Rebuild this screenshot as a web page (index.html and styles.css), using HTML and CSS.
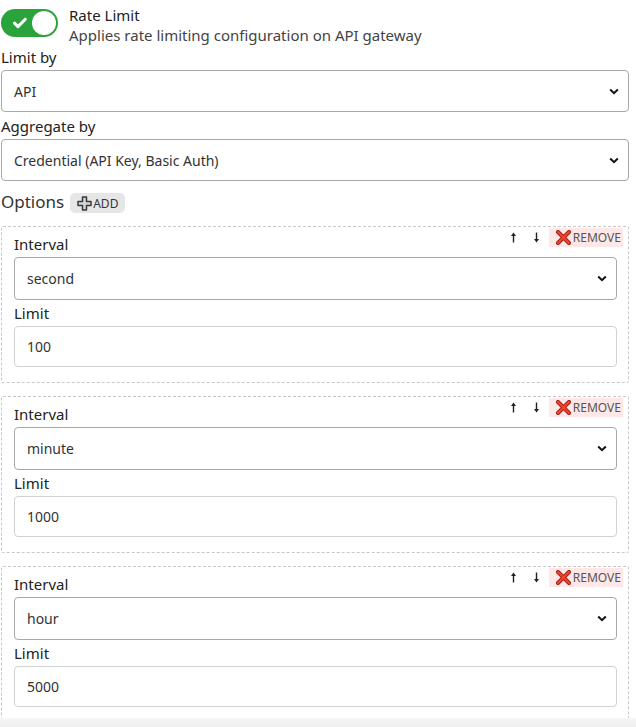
FILE: index.html
```html
<!DOCTYPE html>
<html>
<head>
<meta charset="utf-8">
<link rel="stylesheet" href="styles.css">
</head>
<body>
<div class="page">
  <div class="header">
    <div class="toggle">
      <svg class="check" width="14" height="12" viewBox="0 0 14 12"><path d="M1.5 6.2 L5 9.6 L12.3 2.2" fill="none" stroke="#fff" stroke-width="3" stroke-linecap="round" stroke-linejoin="round"/></svg>
      <span class="knob"></span>
    </div>
    <div class="header-text">
      <div class="title">Rate Limit</div>
      <div class="desc">Applies rate limiting configuration on API gateway</div>
    </div>
  </div>

  <div class="field">
    <div class="label">Limit by</div>
    <div class="select big">
      <span>API</span>
      <svg class="chev" width="10" height="7" viewBox="0 0 10 7"><path d="M1.2 1.5 L5 5.2 L8.8 1.5" fill="none" stroke="#111" stroke-width="2"/></svg>
    </div>
  </div>

  <div class="field">
    <div class="label">Aggregate by</div>
    <div class="select big">
      <span>Credential (API Key, Basic Auth)</span>
      <svg class="chev" width="10" height="7" viewBox="0 0 10 7"><path d="M1.2 1.5 L5 5.2 L8.8 1.5" fill="none" stroke="#111" stroke-width="2"/></svg>
    </div>
  </div>

  <div class="options-head">
    <span class="options-title">Options</span>
    <span class="add-btn">
      <svg width="15" height="15" viewBox="0 0 15 15"><path d="M5.5 1 H9.5 V5.5 H14 V9.5 H9.5 V14 H5.5 V9.5 H1 V5.5 H5.5 Z" fill="#d4d4d4" stroke="#3a3a3a" stroke-width="1.5" stroke-linejoin="round"/></svg>
      <span>ADD</span>
    </span>
  </div>

  <div class="cards">
    <div class="card">
      <div class="actions">
        <svg class="arrow" width="7" height="11" viewBox="0 0 7 11"><path d="M3.5 3 V10.5" stroke="#222" stroke-width="1.4"/><path d="M3.5 0.5 L6 4 H1 Z" fill="#222"/></svg>
        <svg class="arrow" width="7" height="11" viewBox="0 0 7 11"><path d="M3.5 0.5 V8" stroke="#222" stroke-width="1.4"/><path d="M3.5 10.5 L6 7 H1 Z" fill="#222"/></svg>
        <span class="remove">
          <svg width="15" height="15" viewBox="0 0 15 15"><path d="M2 2 L13 13 M13 2 L2 13" stroke="#9a1c12" stroke-width="4" stroke-linecap="round"/><path d="M2 2 L13 13 M13 2 L2 13" stroke="#f0442c" stroke-width="2.4" stroke-linecap="round"/></svg>
          <span>REMOVE</span>
        </span>
      </div>
      <div class="label">Interval</div>
      <div class="select">
        <span>second</span>
        <svg class="chev" width="10" height="7" viewBox="0 0 10 7"><path d="M1.2 1.5 L5 5.2 L8.8 1.5" fill="none" stroke="#111" stroke-width="2"/></svg>
      </div>
      <div class="label">Limit</div>
      <div class="input">100</div>
    </div>

    <div class="card">
      <div class="actions">
        <svg class="arrow" width="7" height="11" viewBox="0 0 7 11"><path d="M3.5 3 V10.5" stroke="#222" stroke-width="1.4"/><path d="M3.5 0.5 L6 4 H1 Z" fill="#222"/></svg>
        <svg class="arrow" width="7" height="11" viewBox="0 0 7 11"><path d="M3.5 0.5 V8" stroke="#222" stroke-width="1.4"/><path d="M3.5 10.5 L6 7 H1 Z" fill="#222"/></svg>
        <span class="remove">
          <svg width="15" height="15" viewBox="0 0 15 15"><path d="M2 2 L13 13 M13 2 L2 13" stroke="#9a1c12" stroke-width="4" stroke-linecap="round"/><path d="M2 2 L13 13 M13 2 L2 13" stroke="#f0442c" stroke-width="2.4" stroke-linecap="round"/></svg>
          <span>REMOVE</span>
        </span>
      </div>
      <div class="label">Interval</div>
      <div class="select">
        <span>minute</span>
        <svg class="chev" width="10" height="7" viewBox="0 0 10 7"><path d="M1.2 1.5 L5 5.2 L8.8 1.5" fill="none" stroke="#111" stroke-width="2"/></svg>
      </div>
      <div class="label">Limit</div>
      <div class="input">1000</div>
    </div>

    <div class="card">
      <div class="actions">
        <svg class="arrow" width="7" height="11" viewBox="0 0 7 11"><path d="M3.5 3 V10.5" stroke="#222" stroke-width="1.4"/><path d="M3.5 0.5 L6 4 H1 Z" fill="#222"/></svg>
        <svg class="arrow" width="7" height="11" viewBox="0 0 7 11"><path d="M3.5 0.5 V8" stroke="#222" stroke-width="1.4"/><path d="M3.5 10.5 L6 7 H1 Z" fill="#222"/></svg>
        <span class="remove">
          <svg width="15" height="15" viewBox="0 0 15 15"><path d="M2 2 L13 13 M13 2 L2 13" stroke="#9a1c12" stroke-width="4" stroke-linecap="round"/><path d="M2 2 L13 13 M13 2 L2 13" stroke="#f0442c" stroke-width="2.4" stroke-linecap="round"/></svg>
          <span>REMOVE</span>
        </span>
      </div>
      <div class="label">Interval</div>
      <div class="select">
        <span>hour</span>
        <svg class="chev" width="10" height="7" viewBox="0 0 10 7"><path d="M1.2 1.5 L5 5.2 L8.8 1.5" fill="none" stroke="#111" stroke-width="2"/></svg>
      </div>
      <div class="label">Limit</div>
      <div class="input">5000</div>
    </div>
  </div>
</div>
<div class="bottom-fade"></div>
</body>
</html>
```

FILE: styles.css
```css
html, body {
  margin: 0;
  padding: 0;
  background: #fff;
  font-family: "Noto Sans", "Open Sans", sans-serif;
  color: #222;
  overflow: hidden;
}

.page {
  padding: 0 7px 0 1px;
}

.header {
  display: flex;
  align-items: flex-start;
  gap: 11px;
  padding-top: 5px;
}

.toggle {
  margin-top: 4px;
  width: 57px;
  height: 28px;
  border-radius: 14px;
  background: #2ba33c;
  display: flex;
  align-items: center;
  justify-content: space-between;
  padding: 0 2px 0 12px;
  box-sizing: border-box;
  flex-shrink: 0;
}

.knob {
  width: 24px;
  height: 24px;
  border-radius: 50%;
  background: #fff;
}

.header-text {
  display: flex;
  flex-direction: column;
}

.title, .desc {
  font-size: 15px;
  line-height: 20px;
}

.title { color: #222; }
.desc { color: #444; }

.field {
  display: flex;
  flex-direction: column;
}

.label {
  font-size: 15px;
  line-height: 20px;
  color: #222;
  margin-bottom: 3px;
}

.field .label {
  margin-top: 2px;
}

.select {
  height: 42px;
  border: 1px solid #a8a8a8;
  border-radius: 4px;
  box-sizing: border-box;
  display: flex;
  align-items: center;
  justify-content: space-between;
  padding: 0 9px 0 12px;
  font-size: 14px;
  color: #333;
}

.select.big {
  margin-bottom: 2px;
}

.input {
  height: 41px;
  border: 1px solid #cfd3d6;
  border-radius: 4px;
  box-sizing: border-box;
  display: flex;
  align-items: center;
  padding: 0 12px;
  font-size: 14px;
  color: #333;
}

.options-head {
  display: flex;
  align-items: center;
  gap: 6px;
  margin-top: 7px;
  height: 24px;
}

.options-title {
  font-size: 17px;
  color: #333;
  line-height: 24px;
}

.add-btn {
  display: inline-flex;
  align-items: center;
  gap: 1px;
  background: #e6e6e6;
  border-radius: 5px;
  height: 20px;
  padding: 0 7px 0 7px;
  font-size: 12px;
  color: #333;
  margin-top: 2px;
}

.cards {
  display: flex;
  flex-direction: column;
  gap: 13px;
  margin-top: 12px;
}

.card {
  position: relative;
  border: 1px dashed #c8c8c8;
  border-radius: 2px;
  padding: 7px 11px 15px 12px;
}

.card .label {
  margin-bottom: 3px;
}

.card .select {
  height: 43px;
}

.card .select + .label {
  margin-top: 3px;
}

.actions {
  position: absolute;
  top: 1px;
  right: 5px;
  display: flex;
  align-items: center;
  height: 19px;
  gap: 16px;
}

.arrow {
  display: block;
}

.remove {
  display: inline-flex;
  align-items: center;
  gap: 2px;
  background: #fde7e7;
  height: 19px;
  padding: 0 2px 0 7px;
  font-size: 12px;
  color: #555;
  margin-left: -7px;
}

.bottom-fade {
  position: fixed;
  left: 0;
  right: 0;
  bottom: 0;
  height: 9px;
  background: linear-gradient(#f6f6f6, #eeeeee);
}
```
